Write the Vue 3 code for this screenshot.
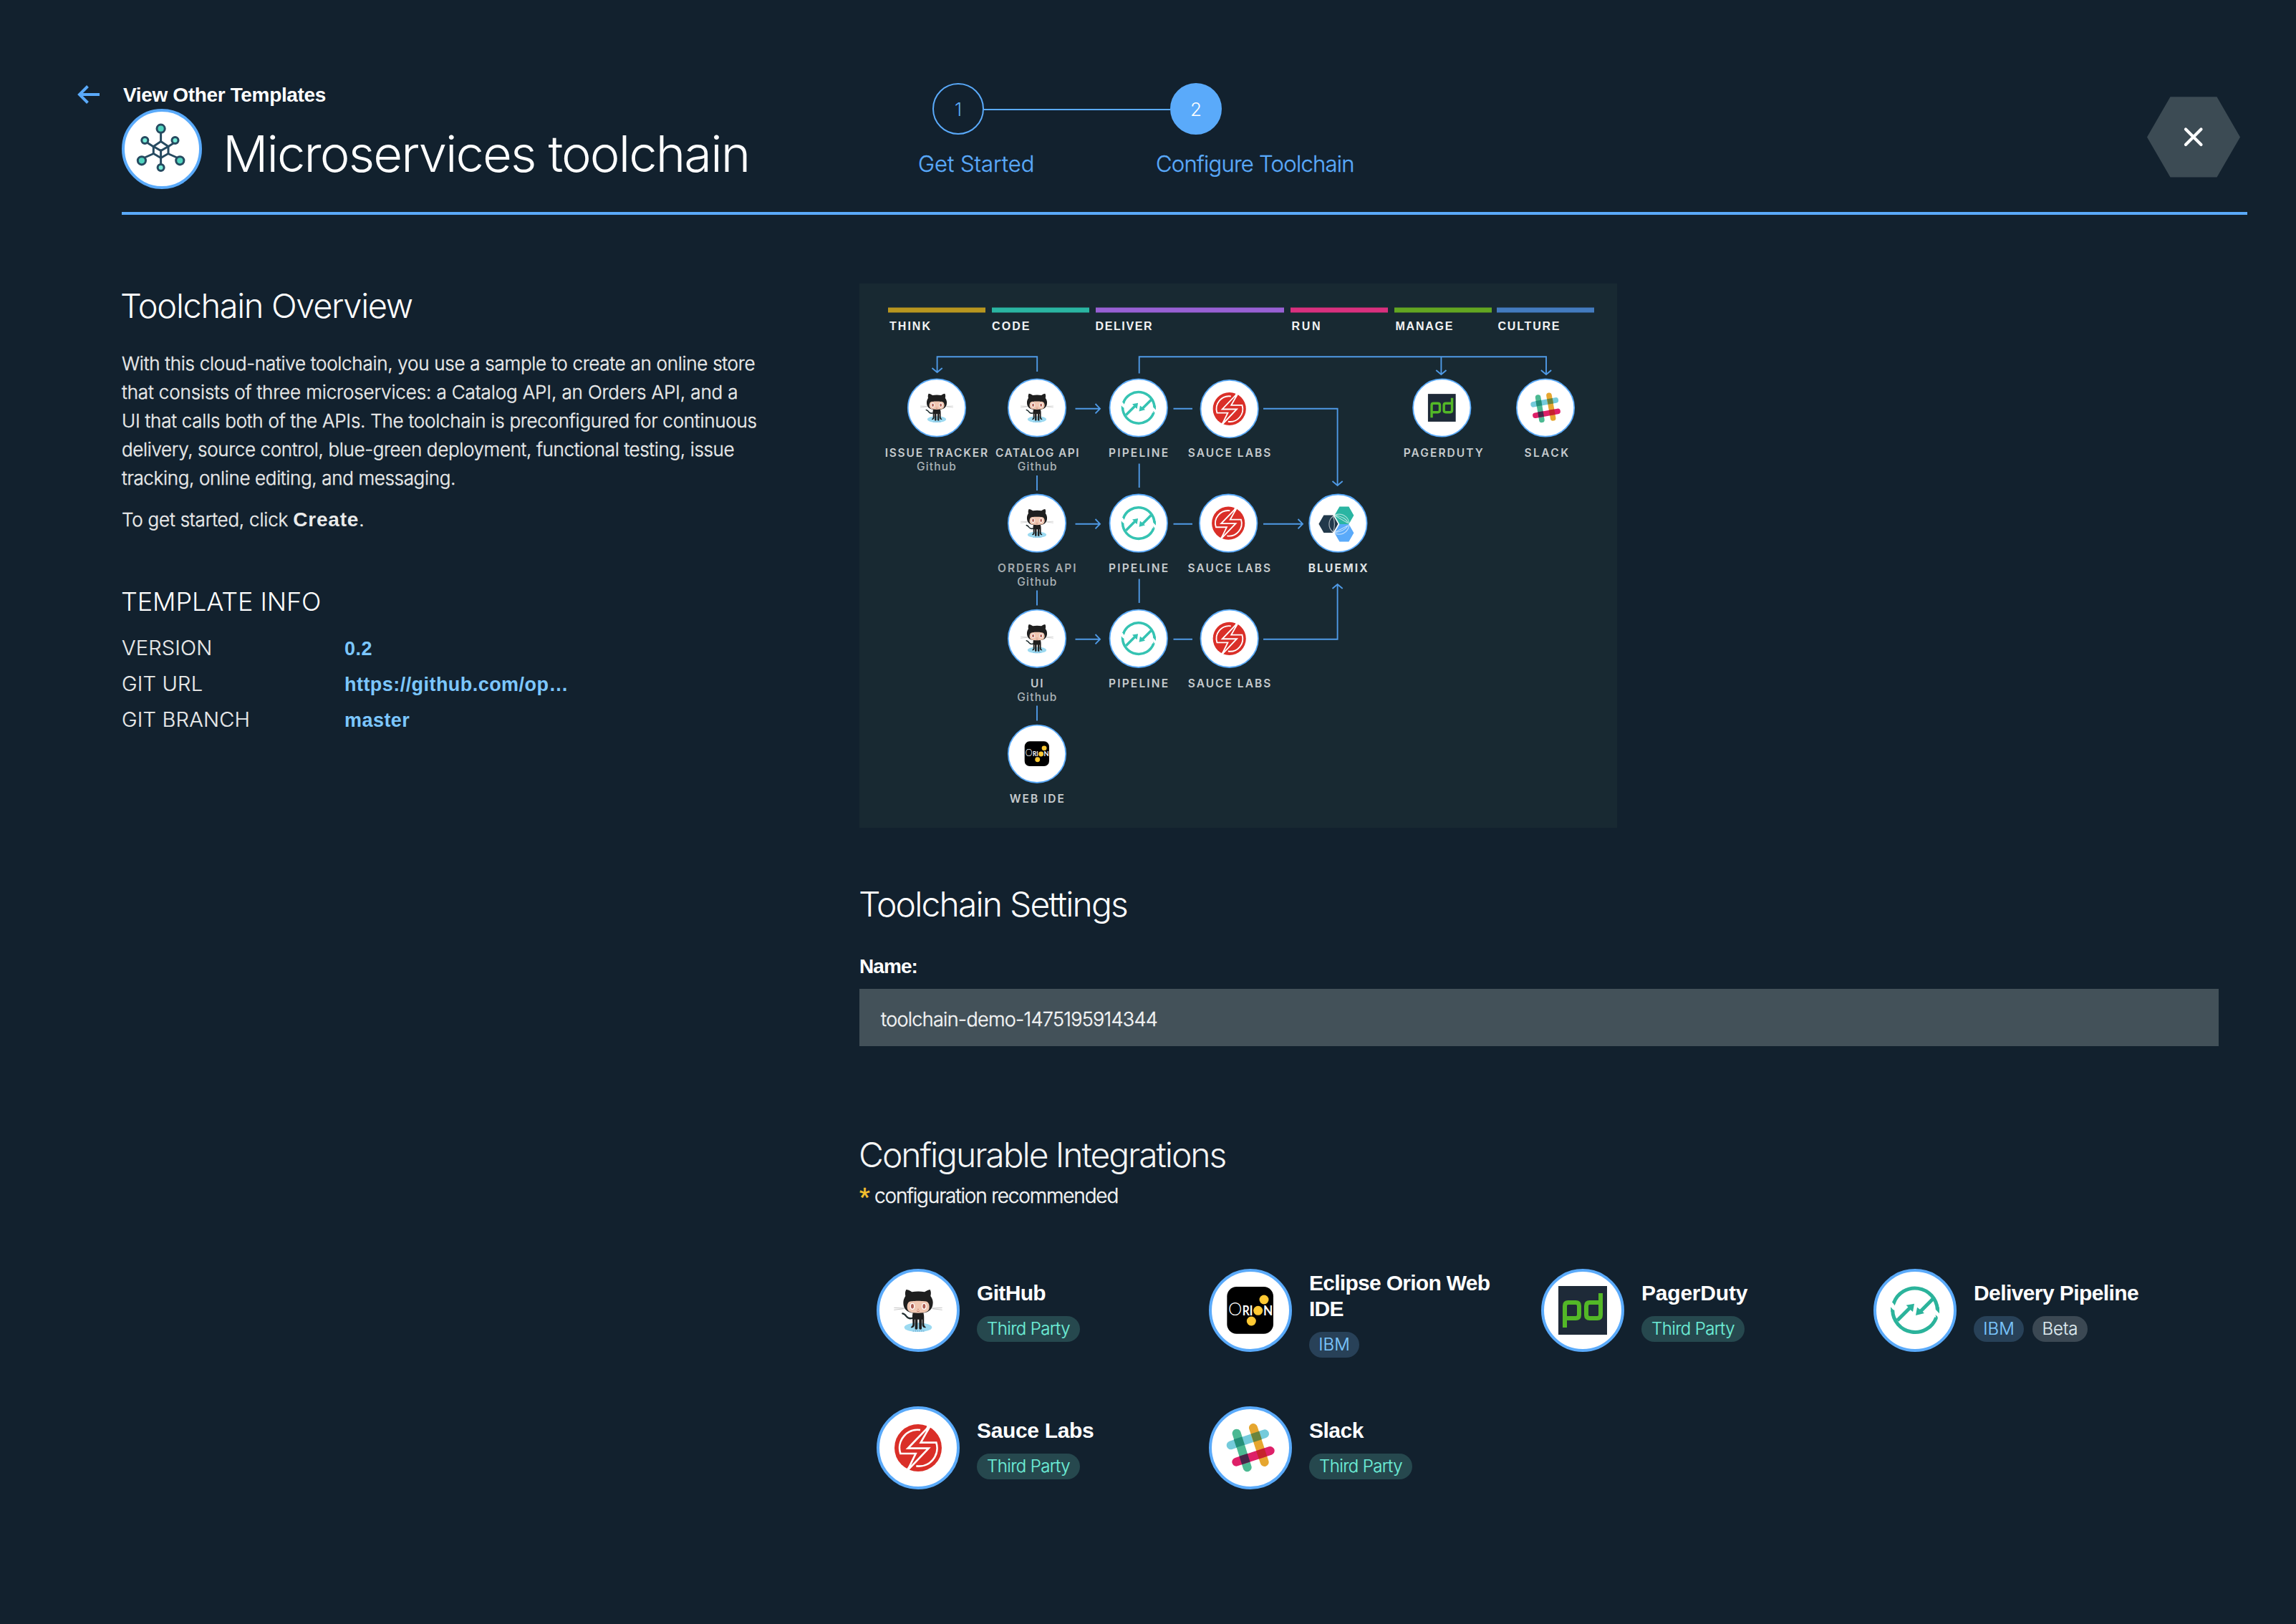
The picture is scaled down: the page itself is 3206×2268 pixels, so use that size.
<script setup>
const paragraph = [
  { text: 'With this cloud-native toolchain, you use a sample to create an online store', tracking: -0.27 },
  { text: 'that consists of three microservices: a Catalog API, an Orders API, and a', tracking: -0.12 },
  { text: 'UI that calls both of the APIs. The toolchain is preconfigured for continuous', tracking: -0.24 },
  { text: 'delivery, source control, blue-green deployment, functional testing, issue', tracking: -0.35 },
  { text: 'tracking, online editing, and messaging.', tracking: -0.34 },
]

const info = [
  { label: 'VERSION', value: '0.2' },
  { label: 'GIT URL', value: 'https://github.com/op…' },
  { label: 'GIT BRANCH', value: 'master' },
]

const phases = [
  { name: 'THINK', x: 1240, w: 136, color: '#b8961f', tx: 1242, tw: 57 },
  { name: 'CODE', x: 1385, w: 136, color: '#2ab5a2', tx: 1385, tw: 52.5 },
  { name: 'DELIVER', x: 1530, w: 263, color: '#9860d4', tx: 1529.5, tw: 79 },
  { name: 'RUN', x: 1802, w: 136, color: '#d9307e', tx: 1803.5, tw: 40 },
  { name: 'MANAGE', x: 1947, w: 136, color: '#62a621', tx: 1948.5, tw: 80 },
  { name: 'CULTURE', x: 2090, w: 136, color: '#437bbf', tx: 2091.5, tw: 86 },
]

// k scales the shared 116px artwork down to the node
const nodes = [
  { icon: 'octocat', k: 0.68, x: 1308, y: 569.5, label: 'ISSUE TRACKER', tw: 143.5, lx: 1307.6, sub: true },
  { icon: 'octocat', k: 0.68, x: 1448, y: 569.5, label: 'CATALOG API', tw: 116.5, lx: 1448.4, sub: true },
  { icon: 'pipeline', k: 0.71, x: 1589.8, y: 569.5, label: 'PIPELINE', tw: 83 },
  { icon: 'sauce', k: 0.7, x: 1716.7, y: 571, label: 'SAUCE LABS', tw: 115.5, ly: 637.7 },
  { icon: 'pager', k: 0.57, x: 2013.3, y: 569.5, label: 'PAGERDUTY', tw: 111, lx: 2015.5 },
  { icon: 'slack', k: 0.635, x: 2158, y: 569.5, label: 'SLACK', tw: 61.5, lx: 2159.5, turn: 8 },
  { icon: 'octocat', k: 0.68, x: 1448, y: 730.7, label: 'ORDERS API', tw: 109.5, sub: true, dim: true },
  { icon: 'pipeline', k: 0.71, x: 1589.8, y: 730.7, label: 'PIPELINE', tw: 83 },
  { icon: 'sauce', k: 0.7, x: 1715.2, y: 730.7, label: 'SAUCE LABS', tw: 115.5, lx: 1716.5 },
  { icon: 'bluemix', k: 1, x: 1868.4, y: 730.7, label: 'BLUEMIX', tw: 83, bold: true },
  { icon: 'octocat', k: 0.68, x: 1448, y: 891.8, label: 'UI', tw: 17.5, sub: true },
  { icon: 'pipeline', k: 0.71, x: 1589.8, y: 891.8, label: 'PIPELINE', tw: 83 },
  { icon: 'sauce', k: 0.7, x: 1716.7, y: 891.8, label: 'SAUCE LABS', tw: 115.5 },
  { icon: 'orion', k: 0.53, x: 1448, y: 1052.8, label: 'WEB IDE', tw: 76 },
]

const integrations = [
  { icon: 'octocat', name: ['GitHub'], tracking: -0.67, tags: ['Third Party'] },
  { icon: 'orion', name: ['Eclipse Orion Web', 'IDE'], tracking: -0.72, tags: ['IBM'] },
  { icon: 'pager', name: ['PagerDuty'], tracking: -0.21, tags: ['Third Party'] },
  { icon: 'pipeline', name: ['Delivery Pipeline'], tracking: -0.59, tags: ['IBM', 'Beta'] },
  { icon: 'sauce', name: ['Sauce Labs'], tracking: -0.34, tags: ['Third Party'] },
  { icon: 'slack', name: ['Slack'], tracking: -0.5, tags: ['Third Party'] },
]

const tagClass = (t) => ({ 'Third Party': 'third', IBM: 'ibm', Beta: 'beta' })[t]
const labelX = (n) => (n.lx ?? n.x) - 0.2
const labelY = (n) => n.ly ?? n.y + 68.1
</script>

<template>
  <div class="page">
    <svg class="defs" width="0" height="0" aria-hidden="true">
      <symbol id="octocat" viewBox="0 0 348 348">
        <ellipse cx="174" cy="245" rx="58" ry="19" fill="#9cdaf1" />
        <path d="M152 206c-12 4-21 1-27-7-4-6-9-11-16-12" fill="none" stroke="#1f2d2f" stroke-width="7" stroke-linecap="round" />
        <path d="M153 184h42c6 10 3 28 4 50 1 6 6 8 8 12-9 3-16-3-16-12v-22h-2v38c0 3-2 4-5 4s-6-2-6-5v-37h-6v37c0 3-3 5-6 5s-5-1-5-4v-38h-2v22c0 9-7 15-16 12 2-4 7-6 8-12 1-22-4-40 2-50z" fill="#1f1f1f" />
        <path d="M154 258v5M163 254v10M171 255v9M180 255v9M189 254v10M197 257v6" stroke="#7fb9dc" stroke-width="4" />
        <path d="M124 87c9 1 17 5 24 10 16-3 37-3 53 0 7-5 15-9 23-10 5 9 4 18 2 27 6 8 10 16 10 28 0 31-20 45-62 45s-62-14-62-45c0-12 4-20 9-28-2-9-2-18 3-27z" fill="#1f1f1f" />
        <path d="M148 136c14-2 37-2 52 0 13-2 21 8 21 23 0 20-14 26-47 26s-46-6-46-26c0-15 8-25 20-23z" fill="#f0c7b1" />
        <ellipse cx="150" cy="157" rx="10" ry="14" fill="#fff" />
        <ellipse cx="199" cy="157" rx="10" ry="14" fill="#fff" />
        <ellipse cx="150" cy="157" rx="6" ry="10" fill="#ad5c51" />
        <ellipse cx="199" cy="157" rx="6" ry="10" fill="#ad5c51" />
        <circle cx="174" cy="169" r="2" fill="#ad5c51" />
        <path d="M168 176q6 6 12 0" fill="none" stroke="#ad5c51" stroke-width="2.4" />
        <path d="M73 163l42 2M73 172l42-5M275 163l-42 2M275 172l-42-5" fill="none" stroke="#a9a9a9" stroke-width="2" />
      </symbol>

      <symbol id="sauce" viewBox="0 0 348 348">
        <circle cx="174" cy="174" r="99" fill="#da2f28" />
        <g fill="none" stroke="#fff" stroke-width="8">
          <path d="M183 99A76 76 0 0 0 100 198H164L131 266" />
          <path d="M218 86L131 176H218L133 265" />
          <path d="M221 88L185 152H250A76 76 0 0 1 166 250" />
        </g>
        <path d="M212 76L229 80 216 104 206 103zM138 248L147 247 134 272 121 268z" fill="#fff" />
      </symbol>

      <symbol id="slack" viewBox="0 0 348 348">
        <g fill="none" stroke-width="36" stroke-linecap="round">
          <path d="M92 163L234 115" stroke="#74cbdb" />
          <path d="M186 90L233 234" stroke="#e6a62f" />
          <path d="M116 113L161 256" stroke="#4cb992" />
          <path d="M115 233L257 186" stroke="#de2068" />
        </g>
        <rect x="-18" y="-18" width="36" height="36" transform="translate(127 150) rotate(-18)" fill="#248f79" />
        <rect x="-18" y="-18" width="36" height="36" transform="translate(199 127) rotate(-18)" fill="#69843e" />
        <rect x="-18" y="-18" width="36" height="36" transform="translate(150 221) rotate(-18)" fill="#47274a" />
        <rect x="-18" y="-18" width="36" height="36" transform="translate(221 198) rotate(-18)" fill="#c6232c" />
      </symbol>

      <symbol id="pipeline" viewBox="0 0 348 348">
        <g fill="none" stroke="currentColor" stroke-width="15">
          <path d="M85 143A94.5 94.5 0 0 1 268 170" />
          <path d="M263 204A94.5 94.5 0 0 1 80 173" />
          <path d="M100 216L152 164M249 126L196 179" />
        </g>
        <path d="M78 138L94 140 89 154zM276 160V187L260 170zM72 160L87 176 73 180zM260 192L271 204 262 208z" fill="currentColor" />
        <path d="M171 146L137 152 146 161 155 172 165 180zM177 195L183 161 193 169 204 178 213 186z" fill="currentColor" />
      </symbol>

      <symbol id="pager" viewBox="0 0 348 348">
        <rect x="72" y="72" width="204" height="204" fill="#1e2a38" />
        <g fill="none" stroke="#53b827" stroke-width="18">
          <path d="M99 246V155Q99 141 113 141H145Q159 141 159 155V193Q159 207 145 207H99" />
          <path d="M249 102V193Q249 207 235 207H203Q189 207 189 193V155Q189 141 203 141H249" />
        </g>
      </symbol>

      <symbol id="orion" viewBox="0 0 348 348">
        <rect x="76" y="75" width="194" height="197" rx="40" fill="#000" />
        <g fill="#fff" font-family="Lato, sans-serif">
          <text x="81" y="194" font-size="76" textLength="58" lengthAdjust="spacingAndGlyphs">O</text>
          <text x="140" y="194" font-size="54" font-weight="700" textLength="44" lengthAdjust="spacingAndGlyphs">RI</text>
          <text x="228" y="194" font-size="54" font-weight="700" textLength="40" lengthAdjust="spacingAndGlyphs">N</text>
        </g>
        <g fill="#ffc933">
          <circle cx="231" cy="129" r="19.500" />
          <circle cx="206" cy="175" r="19.500" />
          <circle cx="178" cy="219" r="19.500" />
        </g>
      </symbol>

      <symbol id="bluemix" viewBox="-58 -58 116 116">
        <path d="M-27 1l7-12.300h13L0 1l-7 12.300h-13z" fill="#22394b" />
        <path d="M-5-11L2-23.300h13L22-11 15 1.300H2z" fill="#2ab5a2" />
        <path d="M-5 13.500L2 1.300h13l7 12.200-7 12.300H2z" fill="#5aaafa" />
        <g fill="none" stroke="#fff" stroke-opacity=".6" stroke-width="1.200">
          <circle cx="1.500" cy="1.400" r="14" />
          <path d="M-7-10Q-3 1-7 13M-4-11Q9-9 14-1M-4 13Q9 11 14 3M-5-11L14 0M-5 13L14 3" />
        </g>
      </symbol>
    </svg>

    <header class="header">
      <div class="brand">
        <a class="back">
          <svg class="arrow" width="32" height="26" viewBox="0 0 32 26">
            <path d="M31 13H3M14.500 1.500L3 13l11.500 11.500" fill="none" stroke="#5aaafa" stroke-width="4" />
          </svg>
          <span>View Other Templates</span>
        </a>
        <div class="title-row">
          <svg width="112" height="112" viewBox="170 152 112 112">
            <circle cx="226" cy="208" r="54" fill="#fff" stroke="#5aaafa" stroke-width="4" />
            <g fill="none" stroke="#264a60" stroke-width="3">
              <path d="M224.600 184V197.300M206 199.500L214.500 205M243 199.500L234.500 205M201 220.500L214.500 214.500M248 220.500L234.500 214.500M224.600 208.500V230" />
              <path d="M224.600 197.500L235 204.500V214.500L224.600 220.500 214.300 214.500V204.500zM214.300 204.500L224.600 210.500 235 204.500" />
            </g>
            <g fill="#50d3be" stroke="#264a60" stroke-width="3">
              <circle cx="224.600" cy="179.700" r="5.600" />
              <circle cx="197.900" cy="224.300" r="5.600" />
              <circle cx="251.300" cy="224.300" r="5.600" />
              <circle cx="202.300" cy="196" r="4.500" fill="#76ead6" />
              <circle cx="244.500" cy="196" r="4.500" fill="#76ead6" />
              <circle cx="224.600" cy="234" r="4.500" fill="#76ead6" />
            </g>
          </svg>
          <h1>Microservices toolchain</h1>
        </div>
      </div>
      <nav class="steps">
        <div class="track">
          <span class="dot">1</span>
          <span class="bar"></span>
          <span class="dot active">2</span>
        </div>
        <div class="step-labels">
          <span>Get Started</span>
          <span class="tight">Configure Toolchain</span>
        </div>
      </nav>
      <button class="close" aria-label="Close">
        <svg width="130" height="113" viewBox="0 0 130 113">
          <path d="M0 56.500L32.500 0.200H97.500L130 56.500 97.500 112.500H32.500z" fill="#3c4b54" />
          <path d="M54 45.500L75.500 67M75.500 45.500L54 67" stroke="#fff" stroke-width="4.200" stroke-linecap="round" />
        </svg>
      </button>
    </header>

    <div class="body">
      <aside class="side">
        <h2 class="overview">Toolchain Overview</h2>
        <p class="text"><template v-for="(l, i) in paragraph" :key="i"><span :style="{ letterSpacing: l.tracking + 'px' }">{{ l.text }}</span><br v-if="i < paragraph.length - 1" /></template></p>
        <p class="text">To get started, click <b>Create</b>.</p>
        <h3>TEMPLATE INFO</h3>
        <dl>
          <div v-for="r in info" :key="r.label" class="row">
            <dt>{{ r.label }}</dt>
            <dd>{{ r.value }}</dd>
          </div>
        </dl>
      </aside>

      <main class="main">
        <svg class="diagram" width="1058" height="760" viewBox="1200 396 1058 760">
          <rect x="1200" y="396" width="1058" height="760" fill="#182932" />
          <g v-for="p in phases" :key="p.name">
            <rect :x="p.x" y="429.500" :width="p.w" height="7" :fill="p.color" />
            <text class="phase" :x="p.tx" y="460.600" :textLength="p.tw">{{ p.name }}</text>
          </g>
          <g class="wires">
            <path d="M1308.600 520V498.300H1448.200V519M1301.500 514l7.100 6 7.100-6" />
            <path d="M1590.700 521.500V498.300H2159V523M2151.900 517l7.100 6 7.100-6M2012.400 498.300V523M2005.300 517l7.100 6 7.100-6" />
            <path d="M1501.500 570.700H1536M1529.500 564l6.500 6.700-6.500 6.700M1638.500 570.700H1665" />
            <path d="M1501.500 731.700H1536M1529.500 725l6.500 6.700-6.500 6.700M1638.500 731.700H1665" />
            <path d="M1501.500 892.700H1536M1529.500 886l6.500 6.700-6.500 6.700M1638.500 892.700H1665" />
            <path d="M1764 570.700H1867.600V678M1860.500 672l7.100 6 7.100-6" />
            <path d="M1764 731.700H1819M1812.500 725l6.500 6.700-6.500 6.700" />
            <path d="M1764 892.700H1867.600V816M1860.500 822l7.100-6 7.100 6" />
            <path d="M1448 664V685M1448 824.500V845.500M1448 985.500V1006.500M1590.700 647.500V681M1590.700 808.500V842" />
          </g>
          <g v-for="(n, i) in nodes" :key="i">
            <circle :cx="n.x" :cy="n.y" r="40.200" fill="#fff" stroke="#5aaafa" stroke-width="1.800" />
            <use
              class="mini"
              :href="'#' + n.icon"
              :x="n.x - 58 * n.k"
              :y="n.y - 58 * n.k"
              :width="116 * n.k"
              :height="116 * n.k"
              :transform="n.turn ? `rotate(${n.turn} ${n.x} ${n.y})` : undefined"
            />
            <text
              class="node"
              :class="{ strong: n.bold, dim: n.dim }"
              :x="labelX(n) - n.tw / 2"
              :y="labelY(n)"
              :textLength="n.tw"
            >{{ n.label }}</text>
            <text v-if="n.sub" class="sub" :x="labelX(n) - 27.500" :y="labelY(n) + 19.300" textLength="55">Github</text>
          </g>
        </svg>

        <h2 class="settings">Toolchain Settings</h2>
        <label class="name">Name:</label>
        <div class="field">toolchain-demo-1475195914344</div>

        <h2 class="config">Configurable Integrations</h2>
        <p class="hint"><span class="star">*</span><span>configuration recommended</span></p>

        <section class="grid">
          <article v-for="it in integrations" :key="it.icon" class="card">
            <svg class="badge-icon" width="116" height="116" viewBox="0 0 116 116">
              <circle cx="58" cy="58" r="56" fill="#fff" stroke="#5aaafa" stroke-width="4" />
              <use :href="'#' + it.icon" width="116" height="116" />
            </svg>
            <div class="meta" :class="{ two: it.name.length > 1 }">
              <h4 :style="{ letterSpacing: it.tracking + 'px' }">
                <template v-for="(l, i) in it.name" :key="i"><br v-if="i" />{{ l }}</template>
              </h4>
              <div class="tags">
                <span v-for="t in it.tags" :key="t" class="tag" :class="tagClass(t)">{{ t }}</span>
              </div>
            </div>
          </article>
        </section>
      </main>
    </div>
  </div>
</template>

<style>
body {
  background: #12212e;
}
</style>

<style scoped>
.page {
  width: 3206px;
  height: 2268px;
  box-sizing: border-box;
  padding-left: 170px;
  overflow: hidden;
  background: #12212e;
  color: #fff;
  font-family: Inter, "Liberation Sans", sans-serif;
  font-weight: 300;
}
.defs {
  display: block;
}
h1, h2, h3, h4, p, dl, dd {
  margin: 0;
  font-weight: 300;
}
svg {
  display: block;
  flex: none;
}
.header {
  display: flex;
  align-items: flex-start;
  box-sizing: border-box;
  width: 2968px;
  height: 300px;
  border-bottom: 4px solid #5aaafa;
}
.brand {
  width: 1113px;
  padding-top: 112px;
}
.back {
  display: flex;
  align-items: center;
  gap: 32px;
  height: 40px;
  margin-left: -62px;
  font: bold 28px/40px "Liberation Sans", sans-serif;
  letter-spacing: -0.35px;
}
.back span {
  padding-top: 2px;
}
.title-row {
  display: flex;
  align-items: center;
  gap: 29px;
  height: 112px;
}
h1 {
  padding-top: 14px;
  font-size: 70.5px;
  line-height: 80px;
  letter-spacing: -1.91px;
  white-space: nowrap;
}
.steps {
  padding-top: 116px;
  color: #5aaafa;
}
.track {
  display: flex;
  align-items: center;
  padding-left: 19px;
}
.dot {
  box-sizing: border-box;
  width: 72px;
  height: 72px;
  border: 2px solid #5aaafa;
  border-radius: 50%;
  font-size: 26px;
  line-height: 69px;
  text-align: center;
}
.dot.active {
  background: #5aaafa;
  color: #fff;
}
.bar {
  width: 260px;
  height: 2px;
  margin-top: 2px;
  background: #5aaafa;
}
.step-labels {
  display: flex;
  margin-top: 21px;
  margin-left: -1px;
  font-size: 31px;
  line-height: 40px;
  white-space: nowrap;
  -webkit-text-stroke: 0.3px;
}
.step-labels span {
  width: 332px;
}
.step-labels .tight {
  letter-spacing: -0.73px;
}
.close {
  margin: 134.500px 10px 0 auto;
  padding: 0;
  border: 0;
  background: none;
}
.body {
  display: flex;
}
.side {
  width: 1030px;
  padding-top: 99px;
  color: #e9eaea;
}
h2 {
  height: 56px;
  font-size: 48px;
  line-height: 56px;
  color: #fff;
  white-space: nowrap;
}
.overview {
  margin-bottom: 33px;
  margin-left: -2px;
  font-size: 47px;
  letter-spacing: -1.35px;
}
.text {
  margin-bottom: 18px;
  font-size: 26px;
  line-height: 40px;
  letter-spacing: -0.2px;
  white-space: nowrap;
  -webkit-text-stroke: 0.4px;
}
.text b {
  font: bold 28px/1 "Liberation Sans", sans-serif;
  letter-spacing: 0.8px;
  -webkit-text-stroke: 0;
}
h3 {
  margin-top: 72px;
  margin-left: -1px;
  font-size: 36px;
  line-height: 44px;
  letter-spacing: -0.1px;
  color: #fff;
}
dl {
  margin-top: 18px;
}
.row {
  display: flex;
  align-items: baseline;
  height: 50px;
  line-height: 50px;
}
dt {
  width: 311px;
  font-size: 29px;
  letter-spacing: 0.2px;
  -webkit-text-stroke: 0.2px;
}
dd {
  font: bold 27px/50px "Liberation Sans", sans-serif;
  letter-spacing: 0.45px;
  color: #7cc7ff;
}
.main {
  width: 1898px;
  padding-top: 96px;
}
.phase {
  fill: #f2f3f4;
  font: bold 16px "Liberation Sans", sans-serif;
}
.node {
  fill: #c6cbce;
  font: 600 15.500px Inter, sans-serif;
}
.node.dim {
  fill: #a4abae;
}
.node.strong {
  fill: #dfe2e4;
  font-weight: 700;
}
.sub {
  fill: #a9b1b5;
  font: 500 15.500px Inter, sans-serif;
}
.wires {
  fill: none;
  stroke: #4f9ae6;
  stroke-width: 1.900;
}
.mini {
  color: #35c3b2;
}
.settings {
  margin-top: 79px;
  margin-left: -1px;
  letter-spacing: -1.84px;
}
.name {
  display: block;
  margin-top: 39px;
  font: bold 28px/40px "Liberation Sans", sans-serif;
  letter-spacing: -0.92px;
}
.field {
  box-sizing: border-box;
  height: 80px;
  margin-top: 11px;
  padding: 3px 30px 0;
  background: #435159;
  color: #f2f3f4;
  font-size: 27px;
  line-height: 79px;
  letter-spacing: -0.7px;
  -webkit-text-stroke: 0.4px;
}
.config {
  margin-top: 124px;
  margin-left: -1px;
  color: #f4f5f5;
  letter-spacing: -2.06px;
}
.hint {
  display: flex;
  height: 40px;
  margin-top: 9px;
  font-size: 28px;
  line-height: 40px;
  letter-spacing: -1.16px;
  color: #f4f5f5;
  -webkit-text-stroke: 0.4px;
}
.star {
  width: 21px;
  color: #f5c12e;
  font: 400 38px/46px "Liberation Sans", sans-serif;
}
.grid {
  display: grid;
  grid-template-columns: repeat(4, 464px);
  grid-auto-rows: 192px;
  margin: 82px 0 0 24px;
}
.card {
  display: flex;
  align-items: flex-start;
  gap: 24px;
}
.badge-icon {
  color: #2bb39b;
}
.meta {
  padding-top: 16px;
}
.meta.two {
  padding-top: 2px;
}
h4 {
  font: bold 30px/36px "Liberation Sans", sans-serif;
  white-space: nowrap;
}
.tags {
  display: flex;
  gap: 12px;
  margin-top: 14px;
}
.tag {
  height: 36px;
  border-radius: 18px;
  font-size: 24px;
  line-height: 36px;
  text-align: center;
  white-space: nowrap;
  -webkit-text-stroke: 0.2px;
}
.third {
  width: 144px;
  background: #26484e;
  color: #6eedd8;
  letter-spacing: -0.63px;
}
.ibm {
  width: 70px;
  background: #284158;
  color: #7cc7ff;
}
.beta {
  width: 77px;
  background: #3b4853;
  color: #dfe9ee;
}
</style>
